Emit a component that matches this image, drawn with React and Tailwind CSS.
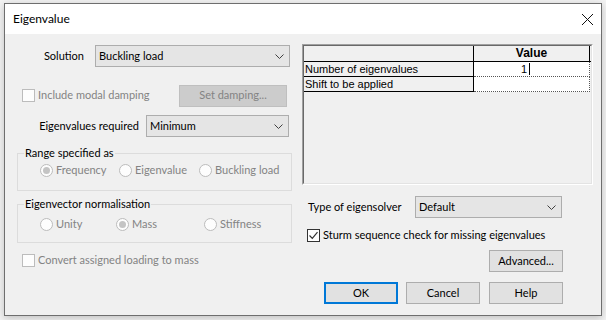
import React from "react";

/**
 * Eigenvalue dialog
 * ------------------------------------------------------
 * Windows-style settings dialog for eigenvalue analysis.
 */
export default function App() {
  return (
    <div className="h-[320px] w-[606px] bg-[#f3f3f3] pl-[4px] pt-[3px] font-['Segoe_UI',Lato,sans-serif] text-[11px] text-black">
      <div className="flex h-[313px] w-[598px] flex-col border border-[#6e6e6e] bg-[#f0f0f0] shadow-[0_2px_8px_rgba(0,0,0,0.22)]">
        {/* Title bar */}
        <div className="flex h-[30px] items-center justify-between bg-white pl-[8px] pr-[8px]">
          <span className="text-[12px]">Eigenvalue</span>
          <svg viewBox="0 0 11 11" className="h-[11px] w-[11px]" stroke="#111" strokeWidth="1">
            <path d="M0 0 L11 11 M11 0 L0 11" />
          </svg>
        </div>

        {/* Body */}
        <div className="flex flex-1">
          <LeftColumn />
          <RightColumn />
        </div>
      </div>
    </div>
  );
}

function LeftColumn() {
  return (
    <div className="flex w-[297px] flex-col">
      {/* Solution */}
      <div className="mt-[11px] flex h-[22px] items-center">
        <span className="w-[79px] text-right">Solution</span>
        <Select className="ml-[11px] w-[195px]" value="Buckling load" />
      </div>

      {/* Modal damping */}
      <div className="mt-[18px] flex h-[21px] items-center justify-between pl-[17px] pr-[15px]">
        <Checkbox disabled label="Include modal damping" />
        <Button disabled className="w-[108px]">
          Set damping...
        </Button>
      </div>

      {/* Eigenvalues required */}
      <div className="mt-[9px] flex h-[22px] items-center">
        <span className="w-[134px] text-right">Eigenvalues required</span>
        <Select className="ml-[7px] w-[143px]" value="Minimum" />
      </div>

      {/* Range specified as */}
      <fieldset className="ml-[12px] mt-[8px] h-[46px] w-[275px] border border-[#dcdcdc]">
        <legend className="ml-[6px] px-[1px] leading-[16px]">Range specified as</legend>
        <div className="mt-[1px] flex h-[16px] items-center pl-[22px]">
          <Radio checked label="Frequency" className="w-[79px]" />
          <Radio label="Eigenvalue" className="w-[80px]" />
          <Radio label="Buckling load" />
        </div>
      </fieldset>

      {/* Eigenvector normalisation */}
      <fieldset className="ml-[12px] mt-[5px] h-[47px] w-[275px] border border-[#dcdcdc]">
        <legend className="ml-[6px] px-[1px] leading-[16px]">Eigenvector normalisation</legend>
        <div className="mt-[4px] flex h-[16px] items-center pl-[22px]">
          <Radio label="Unity" className="w-[76px]" />
          <Radio checked label="Mass" className="w-[88px]" />
          <Radio label="Stiffness" />
        </div>
      </fieldset>

      {/* Convert loading */}
      <div className="mt-[11px] flex h-[13px] items-center pl-[17px]">
        <Checkbox disabled label="Convert assigned loading to mass" />
      </div>
    </div>
  );
}

function RightColumn() {
  return (
    <div className="flex flex-1 flex-col">
      <Grid />

      {/* Eigensolver */}
      <div className="mt-[11px] flex h-[22px] items-center pl-[6px]">
        <span className="w-[107px]">Type of eigensolver</span>
        <Select className="w-[147px]" value="Default" />
      </div>

      <div className="mt-[11px] flex h-[13px] items-center pl-[5px]">
        <Checkbox checked label="Sturm sequence check for missing eigenvalues" />
      </div>

      <div className="mt-[8px] flex justify-end pr-[38px]">
        <Button className="w-[74px]">Advanced...</Button>
      </div>

      <div className="mt-[10px] flex justify-end gap-[9px] pr-[38px]">
        <Button primary className="mr-[-1px] w-[74px]">
          OK
        </Button>
        <Button className="w-[74px]">Cancel</Button>
        <Button className="w-[74px]">Help</Button>
      </div>
    </div>
  );
}

/**
 * Property grid (sunken)
 */
function Grid() {
  return (
    <div className="mt-[10px] h-[141px] w-[291px] border border-b-white border-l-[#a0a0a0] border-r-white border-t-[#a0a0a0]">
      <div className="h-full w-full border border-b-[#e3e3e3] border-l-[#696969] border-r-[#e3e3e3] border-t-[#696969] bg-[#f0f0f0] font-['Liberation_Sans',Arial,sans-serif] text-[11px]">
        {/* Header */}
        <div className="flex h-[16px] border-b border-black">
          <div className="w-[170px] border-r border-black" />
          <div className="w-[116px] border-r border-black text-center text-[12px] font-bold leading-[15px]">
            Value
          </div>
        </div>

        <Row label="Number of eigenvalues" value="1" caret />
        <Row label="Shift to be applied" value="" />
      </div>
    </div>
  );
}

function Row({ label, value, caret = false }) {
  return (
    <div className="flex h-[15px]">
      <div className="w-[170px] border-b border-r border-black pl-[1px] leading-[14px]">{label}</div>
      <div className="flex w-[116px] items-center border-b border-r border-dotted border-b-[#555] border-r-[#555] bg-white pl-[47px] leading-[14px]">
        {value}
        {caret && <span className="ml-[2px] h-[12px] w-px bg-black" />}
      </div>
    </div>
  );
}

function Select({ value, className = "" }) {
  return (
    <div
      className={`flex h-[22px] items-center justify-between border border-[#adadad] bg-[#e5e5e5] pl-[3px] pr-[5px] ${className}`}
    >
      <span>{value}</span>
      <svg viewBox="0 0 9 5" className="h-[5px] w-[9px]" fill="none" stroke="#404040" strokeWidth="1">
        <path d="M0.5 0.5 L4.5 4.5 L8.5 0.5" />
      </svg>
    </div>
  );
}

function Button({ children, disabled = false, primary = false, className = "" }) {
  const look = disabled
    ? "border border-[#bfbfbf] bg-[#cccccc] text-[#838383]"
    : primary
      ? "border-2 border-[#0078d7] bg-[#e1e1e1]"
      : "border border-[#adadad] bg-[#e1e1e1]";
  return (
    <div className={`flex h-[22px] items-center justify-center ${look} ${className}`}>{children}</div>
  );
}

function Checkbox({ label, checked = false, disabled = false }) {
  return (
    <div className="flex items-center">
      <span
        className={`flex h-[13px] w-[13px] items-center justify-center border ${
          disabled ? "border-[#bcbcbc] bg-[#fdfdfd]" : "border-[#333] bg-white"
        }`}
      >
        {checked && (
          <svg viewBox="0 0 11 11" className="h-[11px] w-[11px]" fill="none" stroke="#333" strokeWidth="1.2">
            <path d="M1.5 5.5 L4.3 8.3 L9.5 2.2" />
          </svg>
        )}
      </span>
      <span className={`ml-[3px] ${disabled ? "text-[#838383]" : ""}`}>{label}</span>
    </div>
  );
}

function Radio({ label, checked = false, className = "" }) {
  return (
    <div className={`flex items-center text-[#838383] ${className}`}>
      <span className="flex h-[13px] w-[13px] items-center justify-center rounded-full border border-[#bcbcbc] bg-[#fdfdfd]">
        {checked && <span className="h-[7px] w-[7px] rounded-full bg-[#c4c4c4]" />}
      </span>
      <span className="ml-[3px]">{label}</span>
    </div>
  );
}
